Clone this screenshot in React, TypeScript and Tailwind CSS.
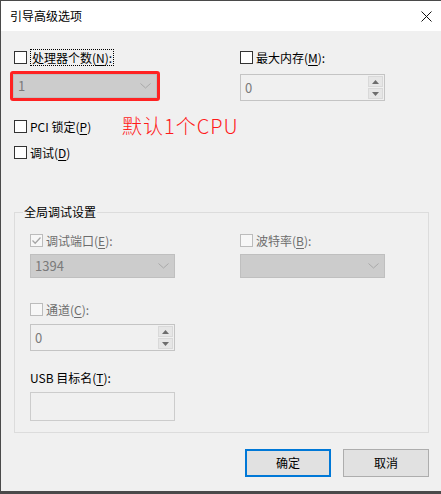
import type { ReactNode } from "react";

const font = { fontFamily: '"Noto Sans CJK SC", "Noto Sans", sans-serif' };

function Check({ checked, disabled }: { checked?: boolean; disabled?: boolean }) {
  return (
    <span
      className={`flex h-[13px] w-[13px] shrink-0 items-center justify-center border ${
        disabled ? "border-[#bcbcbc] bg-[#f7f7f7]" : "border-[#333333] bg-white"
      }`}
    >
      {checked && (
        <svg width="11" height="11" viewBox="0 0 11 11">
          <polyline points="1.5,5.5 4.2,8.2 9.5,2.5" fill="none" stroke="#a6a6a6" strokeWidth="1.3" />
        </svg>
      )}
    </span>
  );
}

function Row({ children, className = "" }: { children: ReactNode; className?: string }) {
  return <div className={`flex h-[17px] items-center gap-[3px] ${className}`}>{children}</div>;
}

function Key({ k }: { k: string }) {
  return <span className="underline underline-offset-2">{k}</span>;
}

function Chevron() {
  return (
    <svg width="11" height="6" viewBox="0 0 11 6" className="mr-[5px]">
      <polyline points="0.5,0.5 5.5,5 10.5,0.5" fill="none" stroke="#a9a9a9" strokeWidth="1" />
    </svg>
  );
}

function Select({ value, className = "" }: { value?: string; className?: string }) {
  return (
    <div
      className={`flex h-[24px] w-[145px] items-center justify-between border border-[#bfbfbf] bg-[#cccccc] pl-[4px] text-[13px] text-[#7a7a7a] ${className}`}
    >
      <span>{value}</span>
      <Chevron />
    </div>
  );
}

function Spin({ className = "" }: { className?: string }) {
  return (
    <div
      className={`flex h-[27px] w-[145px] items-center justify-between border border-[#c4c4c4] bg-[#f0f0f0] pl-[4px] pr-[1px] text-[13px] text-[#7a7a7a] ${className}`}
    >
      <span>0</span>
      <div className="flex flex-col gap-[1px]">
        <div className="flex h-[11px] w-[15px] items-center justify-center border border-[#d9d9d9] bg-[#e6e6e6]">
          <svg width="7" height="4" viewBox="0 0 7 4">
            <polygon points="0,4 3.5,0 7,4" fill="#6d6d6d" />
          </svg>
        </div>
        <div className="flex h-[11px] w-[15px] items-center justify-center border border-[#d9d9d9] bg-[#e6e6e6]">
          <svg width="7" height="4" viewBox="0 0 7 4">
            <polygon points="0,0 3.5,4 7,0" fill="#6d6d6d" />
          </svg>
        </div>
      </div>
    </div>
  );
}

export default function App() {
  return (
    <div
      className="flex h-[494px] w-[441px] flex-col bg-[#4a4a4a] pl-px pt-px pb-[3px] text-[12px] leading-[16px] text-black"
      style={font}
    >
      <div className="flex flex-1 flex-col bg-[#f0f0f0]">
        <div className="flex h-[30px] items-center justify-between bg-white pl-[9px] pr-[9px]">
          <span>引导高级选项</span>
          <svg width="11" height="11" viewBox="0 0 11 11">
            <line x1="0.5" y1="0.5" x2="10.5" y2="10.5" stroke="#111" strokeWidth="1" />
            <line x1="10.5" y1="0.5" x2="0.5" y2="10.5" stroke="#111" strokeWidth="1" />
          </svg>
        </div>

        <div className="flex flex-1 flex-col pl-[9px] pr-[12px]">
          <div className="mt-[18px] flex">
            <div className="flex w-[230px] flex-col">
              <Row className="ml-[4px] gap-[2px]">
                <Check />
                <span className="border border-dotted border-black px-px leading-[15px]">
                  处理器个数(<Key k="N" />):
                </span>
              </Row>
              <div className="mt-[5px] w-[150px] rounded-[3px] border-[3px] border-[#ff2222]">
                <Select value="1" className="w-full" />
              </div>
            </div>
            <div className="flex flex-col">
              <Row>
                <Check />
                <span>
                  最大内存(<Key k="M" />):
                </span>
              </Row>
              <Spin className="mt-[8px]" />
            </div>
          </div>

          <Row className="relative ml-[4px] mt-[17px]">
            <Check />
            <span>
              PCI 锁定(<Key k="P" />)
            </span>
            <span className="absolute left-[108px] top-[-4px] text-[20px] font-light leading-[24px] tracking-[1px] text-[#ff1a1a]">
              默认1个CPU
            </span>
          </Row>
          <Row className="ml-[4px] mt-[9px]">
            <Check />
            <span>
              调试(<Key k="D" />)
            </span>
          </Row>

          <fieldset className="ml-[4px] mt-[43px] w-[415px] border border-[#dcdcdc] pb-[11px]">
            <legend className="ml-[8px] px-px">全局调试设置</legend>
            <div className="flex flex-col pl-[15px]">
              <div className="mt-[12px] flex">
                <div className="flex w-[210px] flex-col">
                  <Row>
                    <Check checked disabled />
                    <span className="text-[#6d6d6d]">
                      调试端口(<Key k="E" />):
                    </span>
                  </Row>
                  <Select value="1394" className="mt-[5px]" />
                </div>
                <div className="flex flex-col">
                  <Row>
                    <Check disabled />
                    <span className="text-[#6d6d6d]">
                      波特率(<Key k="B" />):
                    </span>
                  </Row>
                  <Select className="mt-[5px]" />
                </div>
              </div>
              <Row className="mt-[23px]">
                <Check disabled />
                <span className="text-[#6d6d6d]">
                  通道(<Key k="C" />):
                </span>
              </Row>
              <Spin className="mt-[6px]" />
              <Row className="mt-[18px]">
                <span>
                  USB 目标名(<Key k="T" />):
                </span>
              </Row>
              <div className="mt-[6px] h-[29px] w-[145px] border border-[#cccccc] bg-[#f0f0f0]" />
            </div>
          </fieldset>

          <div className="mt-[16px] flex justify-end gap-[12px]">
            <button className="h-[28px] w-[86px] border-2 border-[#0078d7] bg-[#e1e1e1] text-[12px]">确定</button>
            <button className="h-[28px] w-[86px] border border-[#adadad] bg-[#e1e1e1] text-[12px]">取消</button>
          </div>
        </div>
      </div>
    </div>
  );
}
